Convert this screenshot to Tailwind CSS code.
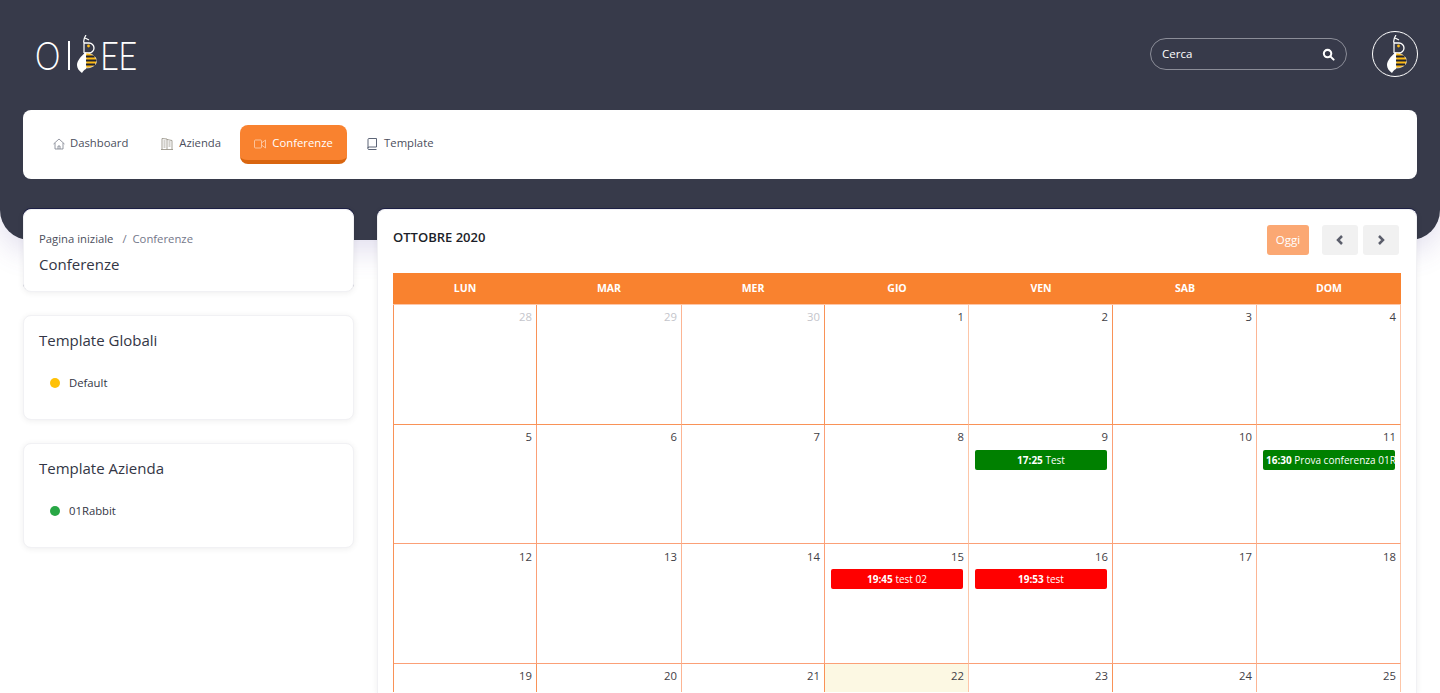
<!DOCTYPE html>
<html lang="it">
<head>
  <meta charset="UTF-8" />
  <meta name="viewport" content="width=device-width, initial-scale=1.0"/>
  <title>Conferenze</title>
  <script src="https://cdn.jsdelivr.net/npm/@tailwindcss/browser@4"></script>
</head>
<body class="bg-white h-[693px] overflow-hidden font-['Open_Sans',sans-serif] text-[#212529]">
  <!-- header scuro -->
  <header class="bg-[#373a4a] h-[240px] rounded-b-[30px] px-[23px] shadow-[0_10px_30px_rgba(90,70,160,0.18)]">
    <div class="h-[110px] flex items-center justify-between">
      <div class="flex items-center h-[40px] ml-[12px] text-white font-['Lato',sans-serif] font-light text-[40px] leading-none">
        <span class="w-[33px] inline-block origin-left scale-x-[0.8]">O</span>
        <span class="w-[9px] h-[29px] border-l-2 border-white"></span>
        <svg class="w-[20px] h-[39px] -mt-[1px]" viewBox="0 0 20 39">
          <path d="M7 18V8C6 5 7 3 9 0M8 3l4 2" fill="none" stroke="#fff" stroke-width="1.2"/>
          <path d="M7 8h5a5 5 0 0 1 0 10H7" fill="none" stroke="#fff" stroke-width="1.300"/>
          <circle cx="11.500" cy="11" r="1.400" fill="#fdb913"/>
          <path d="M9 17C4 21 0 26 0 30c0 3 2 6 5 8 1-2 2-3 4-4z" fill="#fff"/>
          <path d="M9 18c6 0 10.500 4 10.500 8s-4.500 7-10.500 7z" fill="#fdb913" stroke="#fff" stroke-width="0.600"/>
          <path d="M9 21.500h8.500M9 25.500h10.500M9 29.500h9" stroke="#1f2233" stroke-width="1.800"/>
        </svg>
        <span class="ml-[3px] inline-block origin-left scale-x-[0.82] tracking-[-1px]">EE</span>
      </div>
      <div class="flex items-center mb-[2px] -mr-[1px]">
        <div class="w-[197px] h-[32px] rounded-full border border-[#8b8d98] flex items-center justify-between pl-[11px] pr-[11px] text-white text-[11.500px]">
          <span>Cerca</span>
          <svg class="w-[13px] h-[13px]" viewBox="0 0 14 14" fill="none" stroke="#fff" stroke-width="2.200"><circle cx="6" cy="6" r="4"/><path d="M9 9l3.500 3.500" stroke-linecap="round"/></svg>
        </div>
        <div class="ml-[25px] w-[46px] h-[46px] rounded-full border border-white flex items-center justify-center">
          <svg class="w-[20px] h-[39px] ml-[3px]" viewBox="0 0 20 39">
            <path d="M7 18V8C6 5 7 3 9 0M8 3l4 2" fill="none" stroke="#fff" stroke-width="1.2"/>
            <path d="M7 8h5a5 5 0 0 1 0 10H7" fill="none" stroke="#fff" stroke-width="1.300"/>
            <circle cx="11.500" cy="11" r="1.400" fill="#fdb913"/>
            <path d="M9 17C4 21 0 26 0 30c0 3 2 6 5 8 1-2 2-3 4-4z" fill="#fff"/>
            <path d="M9 18c6 0 10.500 4 10.500 8s-4.500 7-10.500 7z" fill="#fdb913" stroke="#fff" stroke-width="0.600"/>
            <path d="M9 21.500h8.500M9 25.500h10.500M9 29.500h9" stroke="#1f2233" stroke-width="1.800"/>
          </svg>
        </div>
      </div>
    </div>
    <!-- menu -->
    <nav class="bg-white rounded-lg h-[69px] flex items-center pl-[15px] text-[11.300px] text-[#4b4e5c]">
      <a class="flex items-center h-[39px] pb-[2px] pl-[15px] pr-[15px] gap-[5px]">
        <svg class="w-[12px] h-[12px]" viewBox="0 0 12 12" fill="none" stroke="#7a7d8c" stroke-width="0.800"><path d="M0.500 6L6 1l5.500 5M2 5v6h8V5M5 11V8h2v3"/></svg>
        Dashboard
      </a>
      <a class="flex items-center h-[39px] pb-[2px] pl-[18px] pr-[19px] gap-[6px]">
        <svg class="w-[12px] h-[13px]" viewBox="0 0 12 13" fill="none" stroke="#8f8a7e" stroke-width="0.800"><path d="M1 12.500V1.500l5 0.500v10.500M6 2.500l5 1v9M0 12.500h12M2.500 4h2M2.500 6h2M2.500 8h2M2.500 10h2M7.500 5h2M7.500 7h2M7.500 9h2"/></svg>
        Azienda
      </a>
      <a class="flex items-center w-[107px] h-[39px] pt-[2px] justify-center gap-[6px] rounded-lg bg-[#f9822f] border-b-[4px] border-[#d9650f] text-white">
        <svg class="w-[12px] h-[10px]" viewBox="0 0 12 10" fill="none" stroke="#fdd3b5" stroke-width="0.800"><rect x="0.500" y="1" width="7" height="8" rx="1"/><path d="M7.500 4l4-3v8l-4-3"/></svg>
        Conferenze
      </a>
      <a class="flex items-center h-[39px] pb-[2px] pl-[20px] gap-[7px]">
        <svg class="w-[10px] h-[12px]" viewBox="0 0 10 12" fill="none" stroke="#4b5468" stroke-width="0.900"><path d="M1 10V1.500a1 1 0 0 1 1-1h7.500V9H2a1 1 0 0 0 0 2.500h7.500"/></svg>
        Template
      </a>
    </nav>
  </header>

  <main class="relative -mt-[31px] px-[23px] flex items-start gap-[23px]">
    <!-- colonna sinistra -->
    <div class="w-[331px] shrink-0 flex flex-col gap-[23px]">
      <section class="bg-white rounded-lg h-[83px] border border-[#f1f1f4] shadow-[0_-1px_0_#1c1f45,0_1px_6px_rgba(0,0,0,0.07)] pt-[21px] pl-[15px]">
        <p class="text-[11.300px] leading-[15px] text-[#4b4e5c]">Pagina iniziale <span class="text-[#74778a] ml-[6px]">/</span> <span class="text-[#74778a] ml-[3px]">Conferenze</span></p>
        <h1 class="text-[15px] leading-[20px] mt-[8px] text-[#333645]">Conferenze</h1>
      </section>
      <section class="bg-white rounded-lg h-[105px] border border-[#f1f1f4] shadow-[0_1px_6px_rgba(0,0,0,0.07)] pt-[14px] pl-[15px]">
        <h2 class="text-[15px] leading-[20px] text-[#333645]">Template Globali</h2>
        <div class="flex items-center mt-[25px] ml-[11px] gap-[9px] text-[11.300px] leading-[15px] text-[#333645]">
          <span class="w-[10px] h-[10px] rounded-full bg-[#ffc107]"></span>Default
        </div>
      </section>
      <section class="bg-white rounded-lg h-[105px] border border-[#f1f1f4] shadow-[0_1px_6px_rgba(0,0,0,0.07)] pt-[14px] pl-[15px]">
        <h2 class="text-[15px] leading-[20px] text-[#333645]">Template Azienda</h2>
        <div class="flex items-center mt-[25px] ml-[11px] gap-[9px] text-[11.300px] leading-[15px] text-[#333645]">
          <span class="w-[10px] h-[10px] rounded-full bg-[#28a745]"></span>01Rabbit
        </div>
      </section>
    </div>

    <!-- calendario -->
    <section class="flex-1 bg-white rounded-t-lg border border-b-0 border-[#f1f1f4] shadow-[0_-1px_0_#1c1f45,0_1px_6px_rgba(0,0,0,0.07)] pl-[15px] pr-[15px] pt-[14px] h-[484px]">
      <div class="h-[49px] flex items-start justify-between">
        <h2 class="text-[13px] font-semibold leading-[26px] text-[#1c1e29]">OTTOBRE 2020</h2>
        <div class="flex items-center mr-[2px] mt-[1px]">
          <button class="w-[42px] h-[30px] rounded-[3px] bg-[#fba873] text-white text-[11.500px]">Oggi</button>
          <button class="ml-[13px] w-[36px] h-[30px] rounded-[3px] bg-[#f1f1f1] flex items-center justify-center">
            <svg class="w-[8px] h-[10px]" viewBox="0 0 8 10" fill="none" stroke="#5b5e6b" stroke-width="2.500"><path d="M6 1L2 5l4 4"/></svg>
          </button>
          <button class="ml-[5px] w-[36px] h-[30px] rounded-[3px] bg-[#f1f1f1] flex items-center justify-center">
            <svg class="w-[8px] h-[10px]" viewBox="0 0 8 10" fill="none" stroke="#5b5e6b" stroke-width="2.500"><path d="M2 1l4 4-4 4"/></svg>
          </button>
        </div>
      </div>
      <div class="w-[1008px]">
        <div class="grid grid-cols-7 h-[32px] pt-[1px] bg-[#f9822f] border-b border-[#fdc6a8] text-white text-[10.500px] font-bold items-center text-center">
          <div>LUN</div><div>MAR</div><div>MER</div><div>GIO</div><div>VEN</div><div>SAB</div><div>DOM</div>
        </div>
        <div class="grid grid-cols-[143px_145px_143px_144px_144px_144px_144px] border-l border-[#f99257] text-[11.300px] leading-[16px] text-[#3f4045]">
          <!-- settimana 1 -->
          <div class="h-[120px] border-r border-b border-[#f99257] text-right pr-[4px] pt-[4px] text-[#c4c5cb]">28</div>
          <div class="h-[120px] border-r border-b border-[#f99257] border-r-[#fcb594] text-right pr-[4px] pt-[4px] text-[#c4c5cb]">29</div>
          <div class="h-[120px] border-r border-b border-[#f99257] text-right pr-[4px] pt-[4px] text-[#c4c5cb]">30</div>
          <div class="h-[120px] border-r border-b border-[#f99257] border-r-[#fdc6a8] text-right pr-[4px] pt-[4px]">1</div>
          <div class="h-[120px] border-r border-b border-[#f99257] text-right pr-[4px] pt-[4px]">2</div>
          <div class="h-[120px] border-r border-b border-[#f99257] border-r-[#fcb594] text-right pr-[4px] pt-[4px]">3</div>
          <div class="h-[120px] border-r border-b border-[#f99257] border-r-[#fdc6a8] text-right pr-[4px] pt-[4px]">4</div>
          <!-- settimana 2 -->
          <div class="h-[119px] border-r border-b border-[#fba077] text-right pr-[4px] pt-[4px]">5</div>
          <div class="h-[119px] border-r border-b border-[#fba077] border-r-[#fcb594] text-right pr-[4px] pt-[4px]">6</div>
          <div class="h-[119px] border-r border-b border-[#fba077] text-right pr-[4px] pt-[4px]">7</div>
          <div class="h-[119px] border-r border-b border-[#fba077] border-r-[#fdc6a8] text-right pr-[4px] pt-[4px]">8</div>
          <div class="h-[119px] border-r border-b border-[#fba077] pt-[4px]">
            <div class="text-right pr-[4px]">9</div>
            <div class="mt-[5px] ml-[6px] mr-[5px] h-[20px] rounded-[2px] bg-[#008000] text-white text-[10px] leading-[20px] text-center"><b class="font-bold">17:25</b> Test</div>
          </div>
          <div class="h-[119px] border-r border-b border-[#fba077] border-r-[#fcb594] text-right pr-[4px] pt-[4px]">10</div>
          <div class="h-[119px] border-r border-b border-[#fba077] border-r-[#fdc6a8] pt-[4px]">
            <div class="text-right pr-[4px]">11</div>
            <div class="mt-[5px] ml-[6px] mr-[5px] h-[20px] rounded-[2px] bg-[#008000] text-white text-[10px] leading-[20px] px-[3px] whitespace-nowrap overflow-hidden"><b class="font-bold">16:30</b> Prova conferenza 01Rabbit</div>
          </div>
          <!-- settimana 3 -->
          <div class="h-[120px] border-r border-b border-[#fba077] text-right pr-[4px] pt-[5px]">12</div>
          <div class="h-[120px] border-r border-b border-[#fba077] border-r-[#fcb594] text-right pr-[4px] pt-[5px]">13</div>
          <div class="h-[120px] border-r border-b border-[#fba077] text-right pr-[4px] pt-[5px]">14</div>
          <div class="h-[120px] border-r border-b border-[#fba077] border-r-[#fdc6a8] pt-[5px]">
            <div class="text-right pr-[4px]">15</div>
            <div class="mt-[4px] ml-[6px] mr-[5px] h-[20px] rounded-[2px] bg-[#ff0000] text-white text-[10px] leading-[20px] text-center"><b class="font-bold">19:45</b> test 02</div>
          </div>
          <div class="h-[120px] border-r border-b border-[#fba077] pt-[5px]">
            <div class="text-right pr-[4px]">16</div>
            <div class="mt-[4px] ml-[6px] mr-[5px] h-[20px] rounded-[2px] bg-[#ff0000] text-white text-[10px] leading-[20px] text-center"><b class="font-bold">19:53</b> test</div>
          </div>
          <div class="h-[120px] border-r border-b border-[#fba077] border-r-[#fcb594] text-right pr-[4px] pt-[5px]">17</div>
          <div class="h-[120px] border-r border-b border-[#fba077] border-r-[#fdc6a8] text-right pr-[4px] pt-[5px]">18</div>
          <!-- settimana 4 -->
          <div class="h-[28px] border-r border-[#f99257] text-right pr-[4px] pt-[4px]">19</div>
          <div class="h-[28px] border-r border-[#fcb594] text-right pr-[4px] pt-[4px]">20</div>
          <div class="h-[28px] border-r border-[#f99257] text-right pr-[4px] pt-[4px]">21</div>
          <div class="h-[28px] border-r border-[#fdc6a8] bg-[#fcf8e3] text-right pr-[4px] pt-[4px]">22</div>
          <div class="h-[28px] border-r border-[#f99257] text-right pr-[4px] pt-[4px]">23</div>
          <div class="h-[28px] border-r border-[#fcb594] text-right pr-[4px] pt-[4px]">24</div>
          <div class="h-[28px] border-r border-[#fdc6a8] text-right pr-[4px] pt-[4px]">25</div>
        </div>
      </div>
    </section>
  </main>
</body>
</html>
